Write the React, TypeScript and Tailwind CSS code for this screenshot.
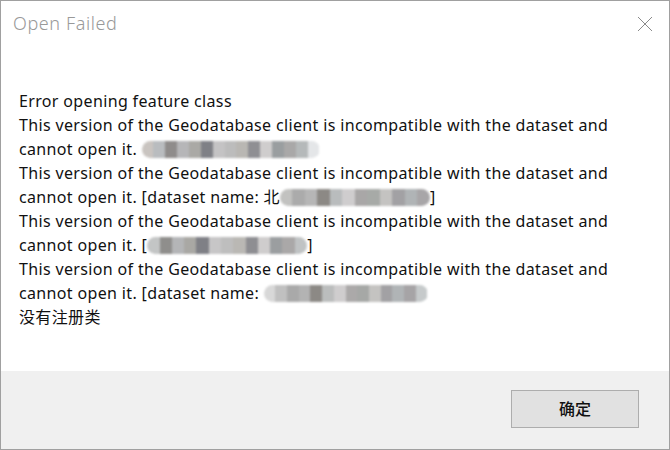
import React from "react";

const cellsA = ["#c9c4c0", "#b9bcbf", "#8f8c8b", "#b6b6b8", "#aaa9a5", "#7f8086", "#c4c3c4", "#bcbcbc", "#b9b7b3", "#8f8f93", "#cfcdcd", "#9a9ea0", "#a9a8a8", "#b5b9ba", "#e4e6e8"];
const cellsB = ["#c2c2c0", "#ababab", "#b6b6b6", "#8c8985", "#b9bcbd", "#cfcdce", "#a9a7a7", "#a7aaa7", "#c4c3c1", "#a2a1a4", "#b0b4b6", "#a8a6a8"];
const cellsC = ["#c3c5c5", "#8f8e8c", "#b4b5b7", "#a9a8a4", "#7f8086", "#c7c6c7", "#bebebe", "#bab8b4", "#8e8e92", "#cfcdcd", "#9b9ea0", "#aaa8a8", "#c0c3c4"];
const cellsD = ["#d8d8d8", "#c0c0c0", "#a9a9a9", "#b3b3b3", "#8c8985", "#bbbdbd", "#cfcdce", "#aba9a9", "#a6a8a6", "#c4c3c1", "#a2a1a4", "#b0b4b6", "#a6a4a6", "#c6cacb"];

const Mosaic = ({ cells, width }: { cells: string[]; width: number }) => {
  const w = width / cells.length;
  return (
    <span
      className="inline-flex h-[17px] rounded-full overflow-hidden blur-[1.2px]"
      style={{ width }}
    >
      {cells.map((c, i) => (
        <span key={i} className="h-full" style={{ width: w, background: c }} />
      ))}
    </span>
  );
};

const msg = "This version of the Geodatabase client is incompatible with the dataset and";

export default function App() {
  return (
    <div
      className="relative w-[670px] h-[450px] bg-white border border-[#a0a0a0] flex flex-col overflow-hidden"
      style={{ fontFamily: '"Noto Sans", "Noto Sans CJK SC", sans-serif' }}
    >
      <div className="absolute left-[-1px] top-[300px] w-[1px] h-[83px] bg-[#47b83a]" />
      <div className="flex items-center justify-between h-[44px] pl-[12px] pr-[16px]">
        <span className="text-[18px] text-[#999999] font-light tracking-[0.6px]">
          Open Failed
        </span>
        <svg width="16" height="16" viewBox="0 0 16 16" className="mt-[1px]">
          <path d="M1 1 L15 15 M15 1 L1 15" stroke="#8a8a8a" strokeWidth="1" fill="none" />
        </svg>
      </div>
      <div className="flex-1 pt-[44px] pl-[18px] text-[16px] leading-[24px] text-[#111111] tracking-[0.35px]">
        <div>Error opening feature class</div>
        <div>{msg}</div>
        <div className="flex items-center">
          cannot open it.&nbsp;
          <Mosaic cells={cellsA} width={178} />
        </div>
        <div>{msg}</div>
        <div className="flex items-center">
          cannot open it. [dataset name: 北
          <Mosaic cells={cellsB} width={150} />]
        </div>
        <div>{msg}</div>
        <div className="flex items-center">
          cannot open it. [
          <Mosaic cells={cellsC} width={160} />]
        </div>
        <div>{msg}</div>
        <div className="flex items-center">
          cannot open it. [dataset name:&nbsp;
          <Mosaic cells={cellsD} width={164} />
        </div>
        <div>没有注册类</div>
      </div>
      <div className="h-[78px] bg-[#f0f0f0] flex items-start justify-end pr-[30px] pt-[19px]">
        <button className="w-[128px] h-[38px] bg-[#e1e1e1] border border-[#adadad] text-[16px] font-medium text-[#111111]">
          确定
        </button>
      </div>
    </div>
  );
}
